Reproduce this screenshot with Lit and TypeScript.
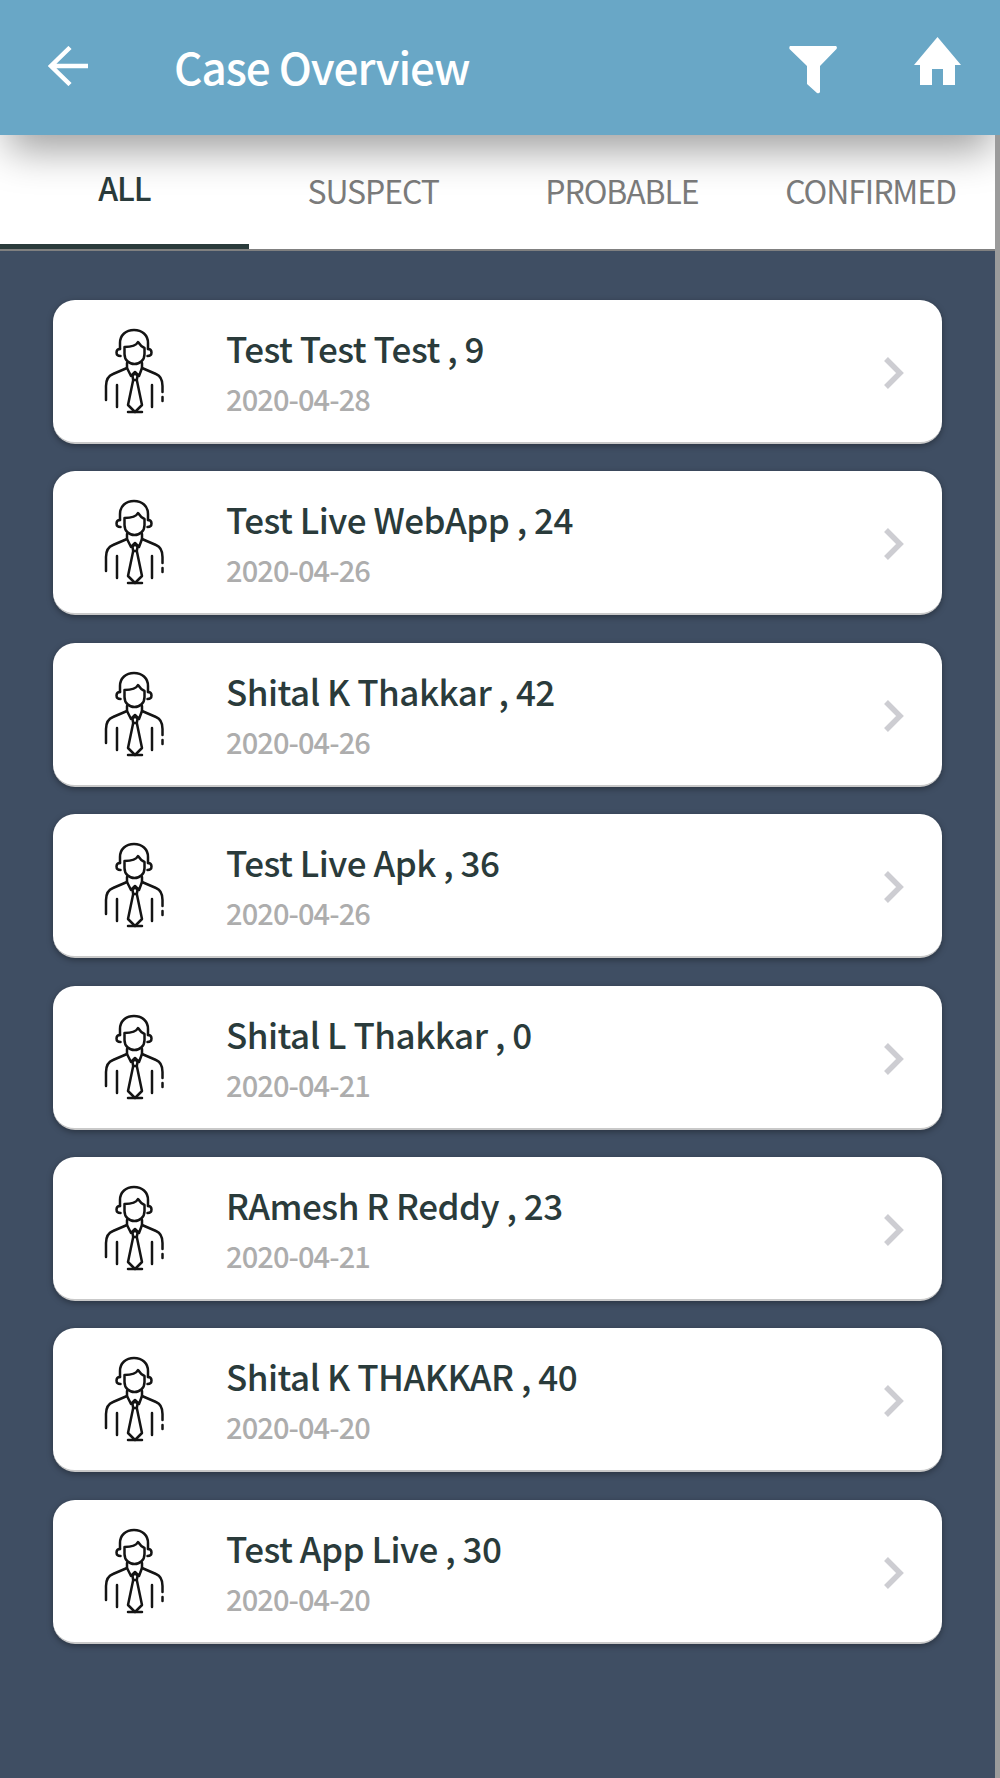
import { LitElement, html, css, svg } from "lit";
import { customElement } from "lit/decorators.js";

const CASES = [
  { name: "Test Test Test , 9", date: "2020-04-28" },
  { name: "Test Live WebApp , 24", date: "2020-04-26" },
  { name: "Shital K Thakkar , 42", date: "2020-04-26" },
  { name: "Test Live Apk , 36", date: "2020-04-26" },
  { name: "Shital L Thakkar , 0", date: "2020-04-21" },
  { name: "RAmesh R Reddy , 23", date: "2020-04-21" },
  { name: "Shital K THAKKAR , 40", date: "2020-04-20" },
  { name: "Test App Live , 30", date: "2020-04-20" },
];

const TABS = ["ALL", "SUSPECT", "PROBABLE", "CONFIRMED"];

const personIcon = svg`
  <svg class="person" viewBox="0 0 70 96" width="70" height="96" fill="none" stroke="#141414" stroke-width="2.5" stroke-linecap="round" stroke-linejoin="round">
    <path d="M20 27 V21 C20 13 26 8 34 8 C42 8 48 13 48 21 V27" />
    <path d="M20 27 C17.500 27 16.500 28.500 16.500 30.500 C16.500 32.500 18 34 20.500 34" />
    <path d="M48 27 C50.500 27 51.500 28.500 51.500 30.500 C51.500 32.500 50 34 47.500 34" />
    <path d="M24.500 25 C30 25 36 24 38 20 C40 23 42 25 44.500 26 V32 C44.500 38 40 42 34.500 42 C29 42 24.500 38 24.500 32 Z" />
    <path d="M27 41 V46 L31 54 L35 50 L39 54 L42 46 V41" />
    <path d="M27 46 L13 52 C8 54 6 58 6 64 V78" />
    <path d="M42 46 L56 52 C61 54 62.500 58 62.500 64 V70 M62.500 75 V79" />
    <path d="M32.500 54 L35 51 L37.500 54 L36.800 58 H33.200 Z" />
    <path d="M33.200 58 L28 83 L35 90 L42 83 L36.800 58" />
    <path d="M17 63 V85 M52 63 V85" />
    <path d="M28 90 H42" />
  </svg>
`;

@customElement("app-root")
export class AppRoot extends LitElement {
  static styles = css`
    :host {
      display: block;
      width: 1000px;
      height: 1778px;
      overflow: hidden;
      background: #3f4e63;
      font-family: "Noto Sans CJK SC", "Noto Sans", sans-serif;
    }

    .header {
      position: relative;
      z-index: 2;
      height: 135px;
      background: #69a7c6;
      box-shadow: 0 23px 40px -8px rgba(0, 0, 0, 0.38);
      display: flex;
      align-items: center;
      color: #fff;
    }

    .back {
      width: 174px;
      padding-left: 48px;
      box-sizing: border-box;
      display: flex;
      margin-top: -3px;
    }

    .title {
      flex: 1;
      font-size: 44px;
      letter-spacing: -1px;
      font-weight: 500;
      margin-top: -3px;
    }

    .filter {
      display: block;
      margin: 5px 77px 0 0;
    }

    .home {
      display: block;
      margin: -13px 39px 0 0;
    }

    .content {
      margin-right: 5px;
    }

    .scrollbar {
      position: absolute;
      z-index: 3;
      top: 135px;
      right: 0;
      width: 5px;
      height: 1643px;
      background: #9b9b9b;
    }

    .tabs {
      display: flex;
      height: 116px;
      box-sizing: border-box;
      background: #fff;
      border-bottom: 2px solid #808080;
    }

    .tab {
      flex: 1;
      height: 114px;
      box-sizing: border-box;
      padding-top: 35px;
      text-align: center;
      font-size: 32px;
      letter-spacing: -1.1px;
      line-height: 40px;
      color: #7b7b7b;
    }

    .tab.active {
      color: #2a3b3b;
      font-weight: 500;
      padding-top: 32px;
      border-bottom: 5px solid #2a3b3b;
    }

    .list {
      display: flex;
      flex-direction: column;
      gap: 27.4px;
      padding: 49px 53px 0 53px;
    }

    .card {
      height: 144px;
      box-sizing: border-box;
      display: flex;
      align-items: center;
      background: #fff;
      border-radius: 22px;
      border-bottom: 2px solid #c9c9c9;
      box-shadow: 0 2px 6px rgba(0, 0, 0, 0.35);
    }

    .person {
      display: block;
      margin: -2px 0 0 47px;
      flex: none;
    }

    .text {
      flex: 1;
      margin-left: 56px;
    }

    .name {
      font-size: 35px;
      letter-spacing: -0.5px;
      line-height: 44px;
      font-weight: 500;
      color: #2a3b3b;
    }

    .date {
      margin-top: 10px;
      font-size: 29px;
      letter-spacing: -0.9px;
      line-height: 36px;
      font-weight: 500;
      color: #adadad;
    }

    .chevron {
      display: block;
      margin: 4px 38px 0 0;
    }
  `;

  render() {
    return html`
      <div class="header">
        <div class="back">
          <svg width="40" height="40" viewBox="0 0 40 40" fill="none" stroke="#fff" stroke-width="4.5">
            <path d="M40 20 H3 M22 1.5 L3 20 L22 38.5" />
          </svg>
        </div>
        <div class="title">Case Overview</div>
        <svg class="filter" width="48" height="48" viewBox="0 0 48 48" fill="#fff">
          <path d="M1 0 H47 Q48.500 1 47.500 3 L31 20 V46 Q30 48 28 47 L18 38 V20 L0.500 3 Q0 1 1 0 Z" />
        </svg>
        <svg class="home" width="47" height="48" viewBox="0 0 47 48" fill="#fff">
          <path d="M23.500 0 L47 28 H41 V48 H29 V32 H18 V48 H6 V28 H0 Z" />
        </svg>
      </div>
      <div class="scrollbar"></div>
      <div class="content">
        <div class="tabs">
          ${TABS.map(
            (t, i) => html`<div class="tab ${i === 0 ? "active" : ""}">${t}</div>`
          )}
        </div>
        <div class="list">
          ${CASES.map(
            (c) => html`
              <div class="card">
                ${personIcon}
                <div class="text">
                  <div class="name">${c.name}</div>
                  <div class="date">${c.date}</div>
                </div>
                <svg class="chevron" width="20" height="32" viewBox="0 0 20 32" fill="none" stroke="#cdcdd2" stroke-width="5.500">
                  <path d="M2 2 L16 16 L2 30" />
                </svg>
              </div>
            `
          )}
        </div>
      </div>
    `;
  }
}
